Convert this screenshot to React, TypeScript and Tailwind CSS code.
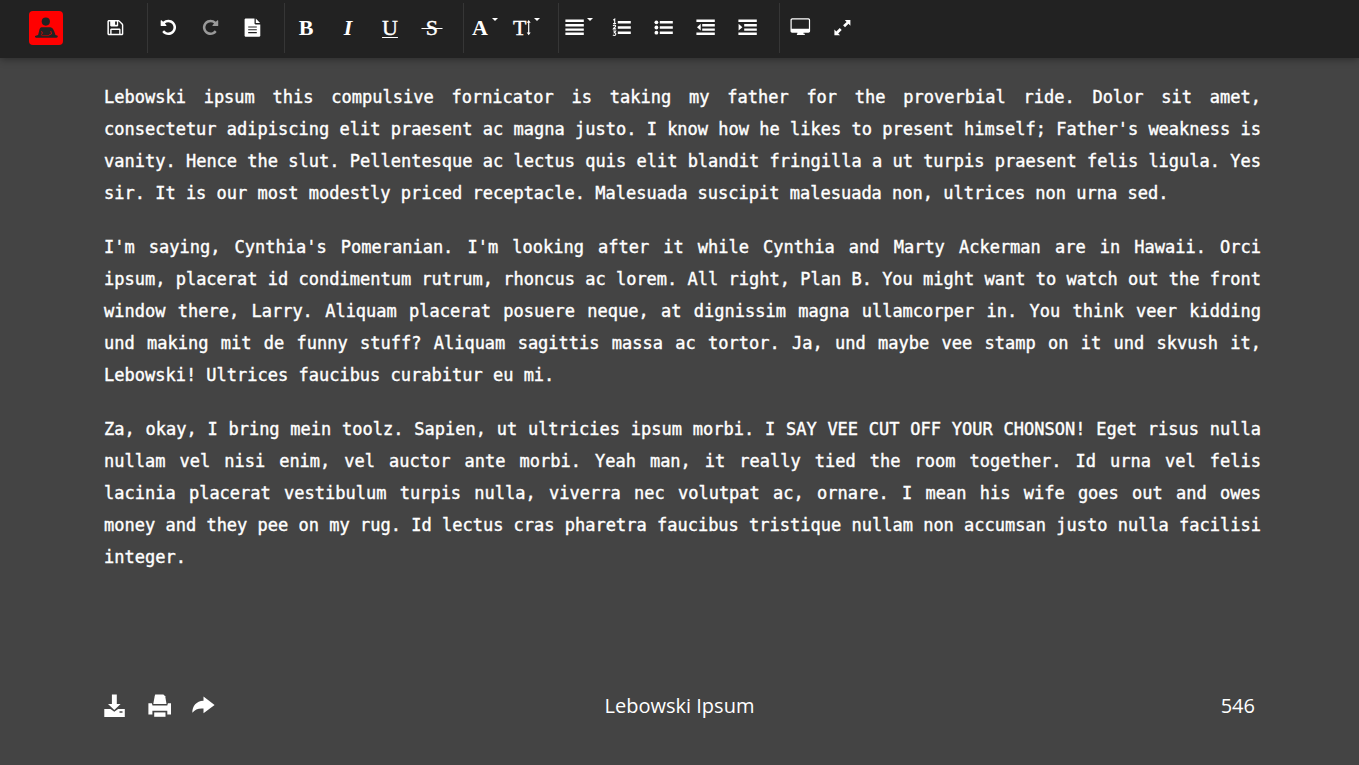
import type { ReactNode } from "react";

const ROTATE =
  "M1664 896q0 156-61 298t-164 245-245 164-298 61q-172 0-327-72.5t-264-204.5q-7-10-6.5-22.5t8.5-20.5l137-138q10-9 25-9 16 2 23 12 73 95 179 147t225 52q104 0 198.5-40.5t163.5-109.5 109.5-163.5 40.5-198.5-40.5-198.5-109.5-163.5-163.5-109.5-198.5-40.5q-98 0-188 35.5t-160 101.5l137 138q31 30 14 69-17 40-59 40h-448q-26 0-45-19t-19-45v-448q0-42 40-59 39-17 69 14l130 129q107-101 244.5-156.5t284.5-55.5q156 0 298 61t245 164 164 245 61 298z";

function Icon({ children, width = 24 }: { children: ReactNode; width?: number }) {
  return (
    <svg
      width={width}
      height="24"
      viewBox={`0 0 ${width} 24`}
      fill="currentColor"
      className="shrink-0 overflow-visible"
      aria-hidden="true"
    >
      {children}
    </svg>
  );
}

function Tool({ label, children, disabled, menu }: { label: string; children: ReactNode; disabled?: boolean; menu?: boolean }) {
  return (
    <button
      type="button"
      aria-label={label}
      aria-haspopup={menu ? "menu" : undefined}
      disabled={disabled}
      className="flex h-[50px] w-[42px] items-center justify-center text-white disabled:text-[#999]"
    >
      {children}
    </button>
  );
}

function Group({ children, last }: { children: ReactNode; last?: boolean }) {
  return (
    <div className={last ? "flex" : "flex border-r border-[#363636] pr-[10px]"}>{children}</div>
  );
}

const letter = "font-['Liberation_Serif',serif] text-[22px] leading-6";

const Caret = () => <path d="M21 2h6l-3 3z" />;

function Toolbar() {
  return (
    <header className="flex h-[58px] items-start bg-[#222] pl-[29px] pt-[3px] shadow-[0_1px_8px_rgba(0,0,0,0.4)]">
      <a href="#" aria-label="Home" className="mr-8 mt-2 block">
        <svg width="34" height="34" viewBox="0 0 34 34" aria-hidden="true">
          <rect width="34" height="34" rx="4" fill="#f00" />
          <circle cx="16.8" cy="10.6" r="4.1" fill="#222" />
          <path
            d="M12.4 16.2h8.9c2.3.2 3.3 2.2 4.1 4.6l1.1 3.3 2.2.7v1.3c-.3.5-.8.7-1.4.7H7.5c-.6 0-1.3-.2-1.5-.8v-1.1l3.1-.8.9-3.6c.4-2 .8-3.9 2.4-4.3z"
            fill="#222"
          />
          <path d="M12.5 20.2l1 2.1-1.6 1.4M21.7 20l.9 2.8-2.4 1.1" fill="none" stroke="#f00" strokeWidth=".8" />
          <path d="M12.5 24.6h7.7" stroke="#b00" strokeWidth=".8" />
        </svg>
      </a>
      <Group>
        <Tool label="Save">
          <Icon>
            <path
              fillRule="evenodd"
              d="M4.4 4h10.2l.9.4 3.2 3.2.6 1.2v9.5l-.9.9H4.4l-1-.9V4.9zM4.9 5.4v12.3h1.3v-4.5l.8-.8h8.7l.8.8v4.5h1.4V9.1l-.5-.9-2.7-2.6-.5-.2v4.3l-.8.8H7l-.8-.8V5.4zm6.2.2v3.2h1.8V5.6zM7.6 13.9v3.8h7.6v-3.8z"
            />
          </Icon>
        </Tool>
      </Group>
      <Group>
        <Tool label="Undo">
          <Icon>
            <path transform="translate(2.4 2.4) scale(.01)" d={ROTATE} />
          </Icon>
        </Tool>
        <Tool label="Redo" disabled>
          <Icon>
            <path transform="translate(20.5 2.4) scale(-.01 .01)" d={ROTATE} />
          </Icon>
        </Tool>
        <Tool label="New document">
          <Icon>
            <path d="M4.4 2.4h9.1v4.9c0 .7.4 1.1 1.1 1.1h4.7v11.5l-.9.9h-14l-.8-.9V3.2z" />
            <path d="M14.8 2.6l4.3 4.5h-4.3z" />
            <path d="M7.2 11h8.6M7.2 13.8h8.6M7.2 16.6h8.6" stroke="#222" strokeWidth="1.1" />
          </Icon>
        </Tool>
      </Group>
      <Group>
        <Tool label="Bold">
          <span className={`${letter} font-bold`}>B</span>
        </Tool>
        <Tool label="Italic">
          <span className={`${letter} font-bold italic`}>I</span>
        </Tool>
        <Tool label="Underline">
          <span className={`${letter} underline decoration-1 underline-offset-2 [-webkit-text-stroke:0.4px]`}>U</span>
        </Tool>
        <Tool label="Strikethrough">
          <span className={`${letter} line-through decoration-1 [-webkit-text-stroke:0.4px]`}>
            {"\u2009S\u2009"}
          </span>
        </Tool>
      </Group>
      <Group>
        <Tool label="Font" menu>
          <span className={`${letter} w-[18px] text-center font-bold`}>A</span>
          <svg width="10" height="24" viewBox="18 0 10 24" fill="currentColor" aria-hidden="true">
            <Caret />
          </svg>
        </Tool>
        <Tool label="Font size" menu>
          <span className={`${letter} w-[13px] text-center [-webkit-text-stroke:0.4px]`}>T</span>
          <svg width="15" height="24" viewBox="13 0 15 24" fill="currentColor" aria-hidden="true">
            <path d="M15.7 4l2 2.7h-1.4v9.9h1.4l-2 2.7-2-2.7h1.4V6.7h-1.4z" />
            <Caret />
          </svg>
        </Tool>
      </Group>
      <Group>
        <Tool label="Alignment" menu>
          <Icon width={28}>
            <path d="M-.6 3.6h18.4V6H-.6zM-.6 8h18.4v2.4H-.6zM-.6 12.4h18.4v2.4H-.6zM-.6 16.6h18.4V19H-.6z" />
            <Caret />
          </Icon>
        </Tool>
        <Tool label="Numbered list">
          <Icon>
            <path d="M7.8 5h13v2.5h-13zM7.8 10.3h13v2.5h-13zM7.8 15.4h13v2.5h-13z" />
            <path
              d="M3.2 4.1l1.5-1v4.2M3.1 7.5h3M3.2 10c.4-1.4 2.6-1.1 2.4.2-.1 1-1.7 1.4-2.3 2.7h2.8M3.2 15h2.4l-1.3 1.6c2.2 0 2 3-.1 2.9-.6 0-1-.3-1.3-.6"
              fill="none"
              stroke="currentColor"
              strokeWidth="1.1"
            />
          </Icon>
        </Tool>
        <Tool label="Bulleted list">
          <Icon>
            <circle cx="4.4" cy="6.3" r="1.9" />
            <circle cx="4.4" cy="11.5" r="1.9" />
            <circle cx="4.4" cy="16.7" r="1.9" />
            <path d="M7.8 5h13v2.5h-13zM7.8 10.3h13v2.5h-13zM7.8 15.4h13v2.5h-13z" />
          </Icon>
        </Tool>
        <Tool label="Decrease indent">
          <Icon>
            <path d="M2.4 3.6h18.4V6H2.4zM8.2 8h12.6v2.4H8.2zM8.2 12.4h12.6v2.4H8.2zM2.4 16.6h18.4V19H2.4zM6.7 7.8v6.8L3 11.2z" />
          </Icon>
        </Tool>
        <Tool label="Increase indent">
          <Icon>
            <path d="M2.4 3.6h18.4V6H2.4zM8.2 8h12.6v2.4H8.2zM8.2 12.4h12.6v2.4H8.2zM2.4 16.6h18.4V19H2.4zM2.6 7.8v6.8l3.8-3.4z" />
          </Icon>
        </Tool>
      </Group>
      <Group last>
        <Tool label="Preview">
          <Icon>
            <path
              fillRule="evenodd"
              d="M3.2 2.3h16.2c1 0 1.7.7 1.7 1.7v11c0 1-.7 1.7-1.7 1.7h-4.9v1h1.3V19H7.9v-1.3h.5v-1H3.2c-1 0-1.7-.7-1.7-1.7V4c0-1 .7-1.7 1.7-1.7zm.1 1.2l-.6.6v8.6h17.2V4.1l-.6-.6z"
            />
          </Icon>
        </Tool>
        <Tool label="Full screen">
          <Icon>
            <path d="M19.4 4v5.7l-1.9-1.9-3.5 3.4-1.9-1.9 3.5-3.4L13.8 4zM3.4 19.3v-5.7l1.9 1.9L8.8 12l1.9 1.9-3.5 3.5 1.9 1.9z" />
          </Icon>
        </Tool>
      </Group>
    </header>
  );
}

const PARAGRAPHS = [
  "Lebowski ipsum this compulsive fornicator is taking my father for the proverbial ride. Dolor sit amet, consectetur adipiscing elit praesent ac magna justo. I know how he likes to present himself; Father's weakness is vanity. Hence the slut. Pellentesque ac lectus quis elit blandit fringilla a ut turpis praesent felis ligula. Yes sir. It is our most modestly priced receptacle. Malesuada suscipit malesuada non, ultrices non urna sed.",
  "I'm saying, Cynthia's Pomeranian. I'm looking after it while Cynthia and Marty Ackerman are in Hawaii. Orci ipsum, placerat id condimentum rutrum, rhoncus ac lorem. All right, Plan B. You might want to watch out the front window there, Larry. Aliquam placerat posuere neque, at dignissim magna ullamcorper in. You think veer kidding und making mit de funny stuff? Aliquam sagittis massa ac tortor. Ja, und maybe vee stamp on it und skvush it, Lebowski! Ultrices faucibus curabitur eu mi.",
  "Za, okay, I bring mein toolz. Sapien, ut ultricies ipsum morbi. I SAY VEE CUT OFF YOUR CHONSON! Eget risus nulla nullam vel nisi enim, vel auctor ante morbi. Yeah man, it really tied the room together. Id urna vel felis lacinia placerat vestibulum turpis nulla, viverra nec volutpat ac, ornare. I mean his wife goes out and owes money and they pee on my rug. Id lectus cras pharetra faucibus tristique nullam non accumsan justo nulla facilisi integer.",
];

export default function App() {
  return (
    <div className="flex min-h-screen flex-col bg-[#444] font-['Open_Sans',sans-serif] text-white">
      <Toolbar />
      <main className="flex flex-1 flex-col gap-[22px] pb-12 pl-[104px] pr-[98px] pt-[23px] text-justify font-['DejaVu_Sans_Mono',monospace] text-[17px] leading-8 [-webkit-text-stroke:0.4px]">
        {PARAGRAPHS.map((text) => (
          <p key={text}>{text}</p>
        ))}
      </main>
      <footer className="grid h-[71px] grid-cols-3 items-start px-[104px]">
        <div className="flex gap-5">
          <button type="button" aria-label="Download">
            <Icon>
              <path d="M7.9.5h4.9v9.6h3.8l-6.3 6-6.3-6h3.9z" />
              <path fillRule="evenodd" d="M.3 15.1h6.2l3.8 2.6 3.8-2.6h6.7v7.8H.3zm15.2 2.1v1.6h3v-1.6z" />
            </Icon>
          </button>
          <button type="button" aria-label="Print">
            <Icon>
              <path d="M7.2.4h8.2l1.8 1.8 1.3 7.8H5.3l1.4-7.8z" />
              <path d="M.4 9.3h3.5l.6 2.2h14.8l.6-2.2H23v11.3h-3.7v-3.8H4.4v3.8h-4z" />
              <path d="M6.2 18.4h11.3v4.4H6.2z" />
            </Icon>
          </button>
          <button type="button" aria-label="Share">
            <Icon>
              <path d="M11.5 2.4l11.1 8.5-11.1 8.4v-4.8C6.3 14.1 3 15.4.3 18.8.4 11.6 4.2 7.2 11.5 6.7z" />
            </Icon>
          </button>
        </div>
        <h1 className="text-center text-[20px] leading-6">Lebowski Ipsum</h1>
        <output aria-label="Word count" className="text-right text-[20px] leading-6">
          546
        </output>
      </footer>
    </div>
  );
}
